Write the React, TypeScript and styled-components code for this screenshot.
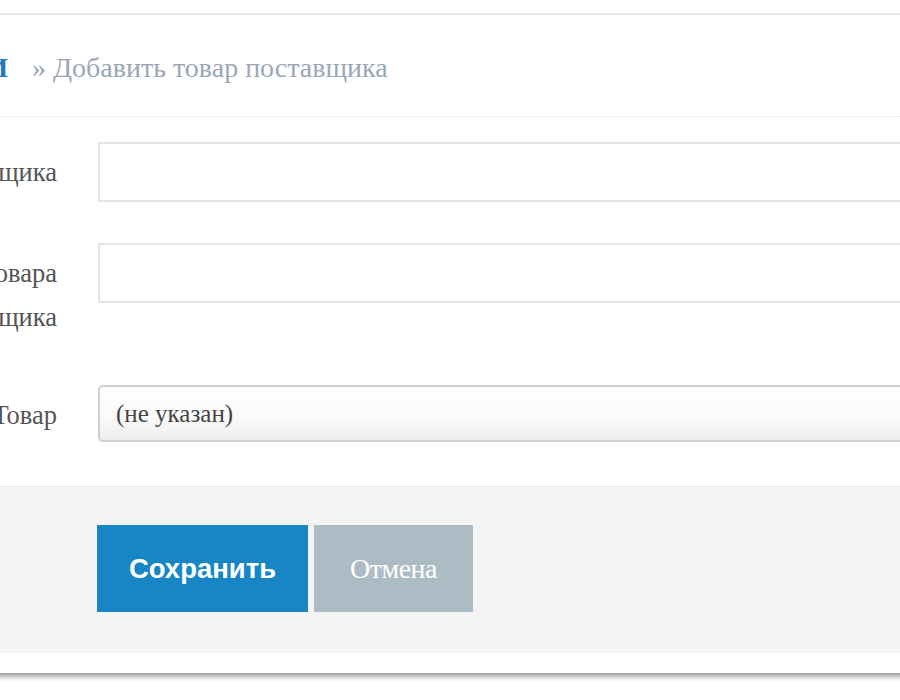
import React from "react";
import styled, { createGlobalStyle } from "styled-components";

const Global = createGlobalStyle`
  html, body {
    margin: 0;
    padding: 0;
    background: #ffffff;
    overflow: hidden;
  }
  body {
    width: 900px;
    height: 700px;
  }
`;

const Page = styled.div`
  padding-top: 13px;
  width: 900px;
  height: 700px;
  overflow: hidden;
`;

const Card = styled.div`
  margin-left: -160px;
  width: 1200px;
  background: #ffffff;
  border-top: 2px solid #e6e6e6;
  padding-bottom: 20px;
  box-shadow: 0 5px 6px -2px rgba(0, 0, 0, 0.45);
`;

const Header = styled.div`
  display: flex;
  align-items: center;
  height: 102px;
  padding-top: 4px;
  box-sizing: border-box;
  border-bottom: 1px dotted #dcdcdc;
  font-family: "Liberation Serif", "Times New Roman", serif;
`;

const Title = styled.div`
  width: 168px;
  display: flex;
  justify-content: flex-end;
  white-space: nowrap;
  color: #2479b8;
  font-weight: bold;
  font-size: 28px;
`;

const Crumb = styled.div`
  margin-left: 24px;
  color: #9aa6b8;
  font-size: 28px;
  white-space: nowrap;
`;

const Form = styled.div`
  padding: 25px 0 44px;
  display: flex;
  flex-direction: column;
  gap: 41px;
`;

const Row = styled.div`
  display: grid;
  grid-template-columns: 217px 1fr;
  column-gap: 41px;
  align-items: start;
`;

const Label = styled.label`
  display: flex;
  flex-direction: column;
  align-items: flex-end;
  padding: 8px 0 5px;
  font-family: "Liberation Serif", "Times New Roman", serif;
  font-size: 26.5px;
  line-height: 44px;
  color: #555555;
  white-space: nowrap;
`;

const Input = styled.div`
  height: 60px;
  box-sizing: border-box;
  border: 2px solid #e4e4e4;
  background: #ffffff;
`;

const Select = styled.div`
  height: 57px;
  box-sizing: border-box;
  border: 2px solid #cfcfcf;
  border-radius: 5px;
  background: linear-gradient(#ffffff 0%, #fafafa 55%, #ededed 100%);
  display: flex;
  align-items: center;
  padding-left: 16px;
  font-family: "Liberation Serif", "Times New Roman", serif;
  font-size: 25px;
  color: #444444;
`;

const Footer = styled.div`
  display: flex;
  gap: 6px;
  padding: 38px 0 41px 257px;
  background: #f4f4f4;
  border-top: 1px solid #ececec;
`;

const Button = styled.button<{ $primary?: boolean }>`
  height: 87px;
  width: ${(p) => (p.$primary ? "211px" : "159px")};
  border: none;
  border-radius: 0;
  margin: 0;
  padding: 0;
  color: #ffffff;
  background: ${(p) => (p.$primary ? "#1886c5" : "#adbcc4")};
  font-family: ${(p) =>
    p.$primary
      ? '"Liberation Sans", Arial, sans-serif'
      : '"Liberation Serif", "Times New Roman", serif'};
  font-weight: ${(p) => (p.$primary ? "bold" : "normal")};
  font-size: ${(p) => (p.$primary ? "27.5px" : "28px")};
  letter-spacing: ${(p) => (p.$primary ? "0" : "-0.5px")};
`;

export default function App() {
  return (
    <Page>
      <Global />
      <Card>
        <Header>
          <Title>ПОСТАВЩИКИ</Title>
          <Crumb>» Добавить товар поставщика</Crumb>
        </Header>
        <Form>
          <Row>
            <Label>Название поставщика</Label>
            <Input />
          </Row>
          <Row>
            <Label>
              <span>Код товара</span>
              <span>поставщика</span>
            </Label>
            <Input />
          </Row>
          <Row>
            <Label>Товар</Label>
            <Select>(не указан)</Select>
          </Row>
        </Form>
        <Footer>
          <Button $primary>Сохранить</Button>
          <Button>Отмена</Button>
        </Footer>
      </Card>
    </Page>
  );
}
